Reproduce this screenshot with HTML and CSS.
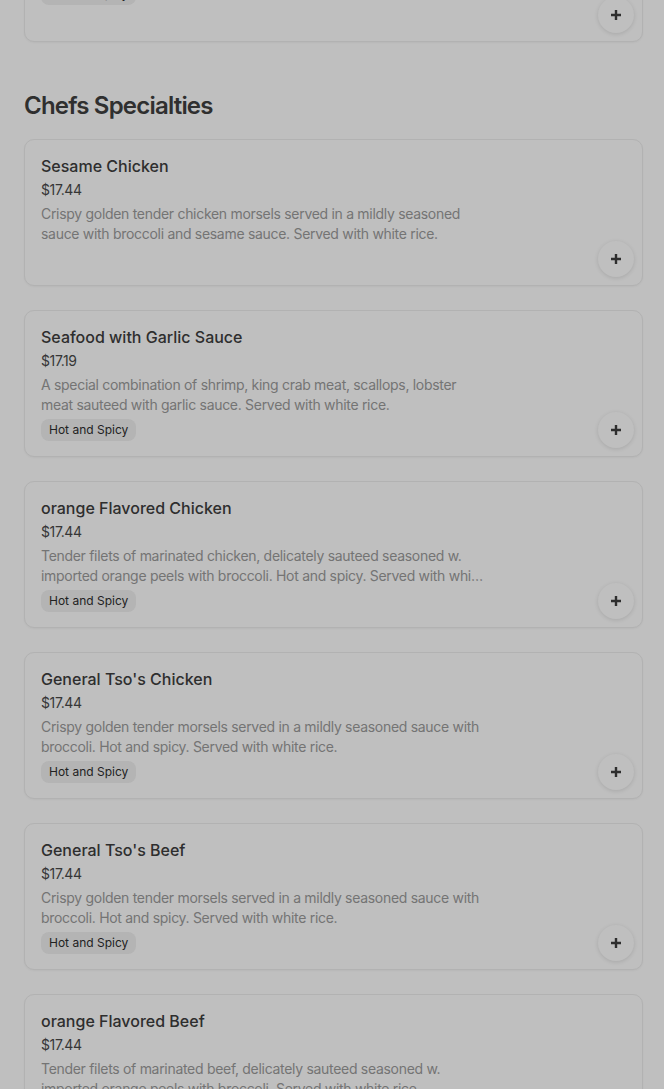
FILE: index.html
```html
<!DOCTYPE html>
<html lang="en">
<head>
<meta charset="utf-8">
<title>Menu</title>
<link rel="stylesheet" href="styles.css">
</head>
<body>
<main class="menu">
  <section class="section section-prev">
    <article class="card card-tall">
      <div class="info">
        <h3 class="name">Kung Pao Chicken</h3>
        <div class="price">$16.95</div>
        <p class="desc">Diced chicken with peanuts, celery and hot peppers in a spicy brown sauce. Served with white rice.</p>
        <span class="tag">Hot and Spicy</span>
      </div>
      <button class="add" aria-label="Add"><svg viewBox="0 0 12 12" width="12" height="12"><path d="M6 1v10M1 6h10" stroke="currentColor" stroke-width="2.4"/></svg></button>
    </article>
  </section>

  <section class="section">
    <h2 class="section-title">Chefs Specialties</h2>
    <div class="list">
      <article class="card">
        <div class="info">
          <h3 class="name">Sesame Chicken</h3>
          <div class="price">$17.44</div>
          <p class="desc">Crispy golden tender chicken morsels served in a mildly seasoned sauce with broccoli and sesame sauce. Served with white rice.</p>
        </div>
        <button class="add" aria-label="Add"><svg viewBox="0 0 12 12" width="12" height="12"><path d="M6 1v10M1 6h10" stroke="currentColor" stroke-width="2.4"/></svg></button>
      </article>
      <article class="card">
        <div class="info">
          <h3 class="name">Seafood with Garlic Sauce</h3>
          <div class="price">$17.19</div>
          <p class="desc">A special combination of shrimp, king crab meat, scallops, lobster meat sauteed with garlic sauce. Served with white rice.</p>
          <span class="tag">Hot and Spicy</span>
        </div>
        <button class="add" aria-label="Add"><svg viewBox="0 0 12 12" width="12" height="12"><path d="M6 1v10M1 6h10" stroke="currentColor" stroke-width="2.4"/></svg></button>
      </article>
      <article class="card">
        <div class="info">
          <h3 class="name">orange Flavored Chicken</h3>
          <div class="price">$17.44</div>
          <p class="desc">Tender filets of marinated chicken, delicately sauteed seasoned w. imported orange peels with broccoli. Hot and spicy. Served with white rice.</p>
          <span class="tag">Hot and Spicy</span>
        </div>
        <button class="add" aria-label="Add"><svg viewBox="0 0 12 12" width="12" height="12"><path d="M6 1v10M1 6h10" stroke="currentColor" stroke-width="2.4"/></svg></button>
      </article>
      <article class="card">
        <div class="info">
          <h3 class="name">General Tso's Chicken</h3>
          <div class="price">$17.44</div>
          <p class="desc">Crispy golden tender morsels served in a mildly seasoned sauce with broccoli. Hot and spicy. Served with white rice.</p>
          <span class="tag">Hot and Spicy</span>
        </div>
        <button class="add" aria-label="Add"><svg viewBox="0 0 12 12" width="12" height="12"><path d="M6 1v10M1 6h10" stroke="currentColor" stroke-width="2.4"/></svg></button>
      </article>
      <article class="card">
        <div class="info">
          <h3 class="name">General Tso's Beef</h3>
          <div class="price">$17.44</div>
          <p class="desc">Crispy golden tender morsels served in a mildly seasoned sauce with broccoli. Hot and spicy. Served with white rice.</p>
          <span class="tag">Hot and Spicy</span>
        </div>
        <button class="add" aria-label="Add"><svg viewBox="0 0 12 12" width="12" height="12"><path d="M6 1v10M1 6h10" stroke="currentColor" stroke-width="2.4"/></svg></button>
      </article>
      <article class="card">
        <div class="info">
          <h3 class="name">orange Flavored Beef</h3>
          <div class="price">$17.44</div>
          <p class="desc">Tender filets of marinated beef, delicately sauteed seasoned w. imported orange peels with broccoli. Served with white rice.</p>
          <span class="tag">Hot and Spicy</span>
        </div>
        <button class="add" aria-label="Add"><svg viewBox="0 0 12 12" width="12" height="12"><path d="M6 1v10M1 6h10" stroke="currentColor" stroke-width="2.4"/></svg></button>
      </article>
    </div>
  </section>
</main>
</body>
</html>
```
FILE: styles.css
```css
* { box-sizing: border-box; }
html, body { margin: 0; padding: 0; }
body {
  background: #bfbfbf;
  font-family: Inter, "Noto Sans", "Liberation Sans", sans-serif;
  color: #2b2b2b;
  height: 1089px;
  overflow: hidden;
}
.menu {
  padding: 0 21px 0 24px;
  margin-top: -126px;
}
.section-prev { margin-bottom: 48px; }
.section-title {
  margin: 0 0 17px;
  font-size: 24px;
  line-height: 32px;
  font-weight: 600;
  letter-spacing: -0.8px;
  color: #2f2f2f;
}
.list {
  display: flex;
  flex-direction: column;
  gap: 24px;
}
.card {
  position: relative;
  min-height: 147px;
  border: 1px solid #b2b2b2;
  border-radius: 10px;
  background: #bfbfbf;
  box-shadow: 0 1px 2px rgba(0,0,0,0.04);
  padding: 16px 16px 15px;
}
.card-tall { padding-bottom: 36px; }
.info {
  display: flex;
  flex-direction: column;
  align-items: flex-start;
  gap: 4px;
  width: 446px;
}
.name {
  margin: 0;
  font-size: 16px;
  line-height: 20px;
  font-weight: 500;
  color: #2e2e2e;
}
.price {
  font-size: 14px;
  line-height: 20px;
  color: #363636;
  letter-spacing: -0.4px;
}
.desc {
  margin: 0;
  font-size: 14px;
  line-height: 20px;
  color: #747474;
  letter-spacing: -0.3px;
  display: -webkit-box;
  -webkit-line-clamp: 2;
  -webkit-box-orient: vertical;
  overflow: hidden;
}
.tag {
  display: inline-block;
  height: 22px;
  line-height: 22px;
  padding: 0 8px;
  border-radius: 8px;
  background: #b4b4b4;
  font-size: 12px;
  color: #222;
}
.add {
  position: absolute;
  right: 8px;
  bottom: 8px;
  width: 36px;
  height: 36px;
  border-radius: 50%;
  border: none;
  padding: 0;
  background: #bfbfbf;
  box-shadow: 0 1px 4px rgba(0,0,0,0.12);
  color: #2e2e2e;
  display: flex;
  align-items: center;
  justify-content: center;
}
```
